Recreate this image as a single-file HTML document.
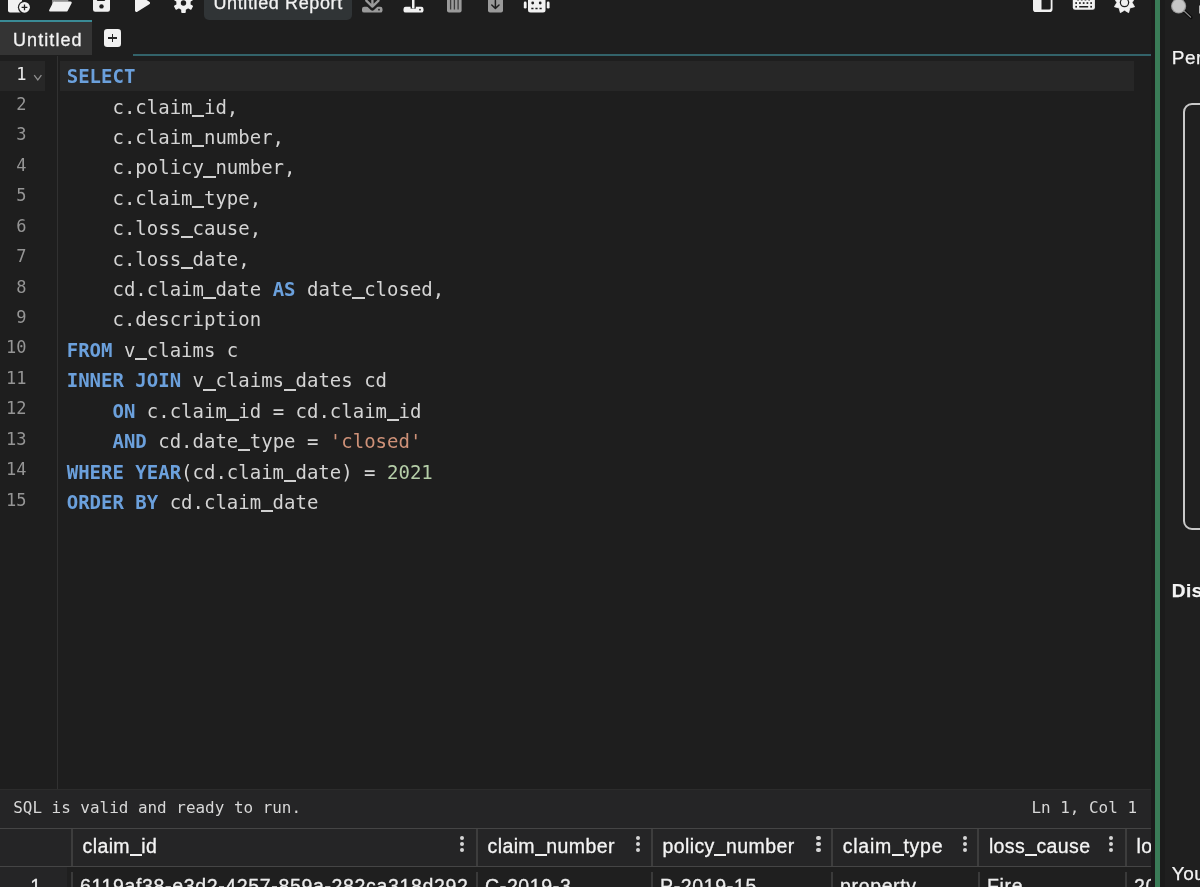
<!DOCTYPE html>
<html lang="en">
<head>
<meta charset="utf-8">
<title>SQL Report Editor</title>
<style>
*{box-sizing:border-box;margin:0;padding:0}
html,body{width:1200px;height:887px;overflow:hidden;background:#1e1e1e}
body{position:relative;font-family:"Liberation Sans",sans-serif;color:#fff}
.abs{position:absolute}
#left{position:absolute;left:0;top:0;width:1151px;height:887px;overflow:hidden;background:#1e1e1e;will-change:transform}
#split{position:absolute;left:1151px;top:0;width:14px;height:887px;background:#1b1b1b}
#split i{position:absolute;left:4px;top:0;width:5px;height:887px;background:#3a7b57}
#right{position:absolute;left:1165px;top:0;width:35px;height:887px;background:#1f1f1f;overflow:hidden;will-change:transform}
.rt{position:absolute;left:6.8px;font-size:19px;line-height:24px;color:#f3f3f3;-webkit-text-stroke:.25px #f3f3f3;white-space:nowrap;letter-spacing:.5px}
#rbox{position:absolute;left:18px;top:102.5px;width:60px;height:427px;border:2px solid #c9c9c9;border-radius:9px}
/* toolbar */
#tb svg{position:absolute;top:0;overflow:visible}
#rname{position:absolute;left:204px;top:-12px;width:148px;height:32px;background:#303436;border-radius:5px;overflow:hidden}
#rname span{position:absolute;left:9.5px;top:5.3px;font-size:18px;line-height:20px;white-space:nowrap;color:#f2f2f2;-webkit-text-stroke:.3px #f2f2f2;letter-spacing:.62px}
/* tabs */
#tab{position:absolute;left:0;top:20.3px;width:91.7px;height:35px;background:#343434;border-top:2px solid #3a8b96}
#tab span{position:absolute;left:13px;top:7.7px;font-size:18px;line-height:20px;color:#f2f2f2;-webkit-text-stroke:.3px #f2f2f2;white-space:nowrap;letter-spacing:1.08px}
#plus{position:absolute;left:104px;top:29.2px;width:17.3px;height:17.8px;background:#f1f1f1;border-radius:3.2px}
#plus:before{content:"";position:absolute;left:4.3px;top:7.9px;width:8.6px;height:1.6px;background:#242424}
#plus:after{content:"";position:absolute;left:7.8px;top:4.5px;width:1.6px;height:8.4px;background:#242424}
#tabline{position:absolute;left:133px;top:54px;width:1018.5px;height:2px;background:#33636a}
/* editor */
#gutter{position:absolute;left:0;top:56px;width:58px;height:733px;border-right:1.5px solid #313131}
#gact{position:absolute;left:0;top:61px;width:45px;height:30px;background:#272727}
#lact{position:absolute;left:60px;top:61px;width:1074px;height:30px;background:#272727}
.ln{position:absolute;left:0;width:26.5px;text-align:right;font-family:"DejaVu Sans Mono","Liberation Mono",monospace;font-size:17px;line-height:30.43px;height:30.43px;color:#959595}
.ln.a{color:#eaeaea}
#code{position:absolute;left:66.7px;top:61.1px;font-family:"DejaVu Sans Mono","Liberation Mono",monospace;font-size:19px;line-height:30.43px;color:#d4d4d4;white-space:pre}
#code div{height:30.43px}
#code b{color:#6ba0dc;font-weight:bold}
#code s{color:#ce9178;text-decoration:none}
#code i{font-style:normal;color:transparent;position:relative;display:inline-block;height:22px;vertical-align:top}
#code i:after{content:"";position:absolute;left:-.5px;right:-.5px;top:23.2px;height:2px;background:#d0d0d0}
#code u{color:#b5cea8;text-decoration:none}
/* status */
#status{position:absolute;left:0;top:789px;width:1151px;height:39px;background:#252526;border-top:1px solid #2c2c2c;font-family:"DejaVu Sans Mono","Liberation Mono",monospace;font-size:15.95px;line-height:20px;color:#d8d8d8}
#status .l{position:absolute;left:13.2px;top:7.5px;white-space:pre}
#status .r{position:absolute;right:14px;top:7.5px;white-space:pre}
/* grid */
#grid{position:absolute;left:0;top:828px;width:1151px;height:59px;background:#1f1f1f;overflow:hidden}
#ghead{position:absolute;left:0;top:0;width:1151px;height:39px;background:#252526;border-top:1px solid #454545;border-bottom:1px solid #454545}
.hc{position:absolute;top:0;height:37px;border-left:2px solid #3d3d3d;font-size:19.5px;letter-spacing:.4px;line-height:34px;color:#f4f4f4;-webkit-text-stroke:.3px #f4f4f4;padding-left:9.5px;white-space:nowrap}
.hc i{font-style:normal;color:transparent;-webkit-text-stroke:0 transparent;position:relative;display:inline-block;height:37px;vertical-align:top}
.hc i:after{content:"";position:absolute;left:-.3px;right:-.3px;top:25.2px;height:1.9px;background:#f0f0f0}
.kb{position:absolute;top:6.8px;width:4.5px;height:18px}
.kb i{position:absolute;left:0;width:4.5px;height:4.5px;border-radius:50%;background:#d6d6d6}
.ds{position:absolute;top:44px;width:2px;height:20px;background:#3a3a3a}
.dc{position:absolute;top:42.5px;height:30px;font-size:19.5px;letter-spacing:.65px;line-height:30px;color:#ececec;-webkit-text-stroke:.3px #ececec;white-space:nowrap}
#rn{position:absolute;left:0;top:39px;width:67px;height:30px;background:#252526}
</style>
</head>
<body>
<div id="left">
  <div id="tb">
<svg class="abs" style="left:0;top:0" width="600" height="20" viewBox="0 0 600 20">
 <!-- new file -->
 <path d="M8 -6 h9 l5 5 v11.5 a2 2 0 0 1 -2 2 h-10 a2 2 0 0 1 -2 -2 z" fill="#f1f1f1"/>
 <circle cx="24.5" cy="7.3" r="6.6" fill="#1e1e1e"/><circle cx="24.5" cy="7.3" r="5.4" fill="#f1f1f1"/>
 <path d="M21.6 7.3 h5.8 M24.5 4.4 v5.8" stroke="#1e1e1e" stroke-width="1.3" fill="none"/>
 <!-- folder open -->
 <path d="M52 -4 h6 l2 2 h8.3 v3.5 h-13.5 l-2.8 5z" fill="#8e8e8e"/>
 <path d="M54.4 1.5 h16.1 a1.2 1.2 0 0 1 1.1 1.7 l-3.9 7.5 a1.6 1.6 0 0 1 -1.4 0.9 h-16.1 a1.1 1.1 0 0 1 -1 -1.6 l3.9 -7.6 a1.6 1.6 0 0 1 1.3 -0.9z" fill="#f1f1f1"/>
 <!-- save -->
 <path d="M93 -6 h14 l3 3 v12.5 a2.2 2.2 0 0 1 -2.2 2.2 h-12.600000000000001 a2.2 2.2 0 0 1 -2.2 -2.2z" fill="#f1f1f1"/>
 <rect x="96.8" y="-3" width="8.4" height="3.9" rx="0.8" fill="#1e1e1e"/>
 <circle cx="101.5" cy="6.4" r="2.2" fill="#1e1e1e"/>
 <!-- play -->
 <path d="M135 -4.6 a1.5 1.5 0 0 1 2.3 -1.3 l12 7.6 a1.5 1.5 0 0 1 0 2.6 l-12 7.4 a1.5 1.5 0 0 1 -2.3 -1.3z" fill="#f1f1f1"/>
 <!-- gear -->
 <g transform="translate(183.5,3)" fill="#f1f1f1">
  <circle r="7.2"/>
  <g id="teeth"><rect x="-2.3" y="-10" width="4.6" height="20" rx="1"/><rect x="-2.3" y="-10" width="4.6" height="20" rx="1" transform="rotate(60)"/><rect x="-2.3" y="-10" width="4.6" height="20" rx="1" transform="rotate(120)"/></g>
  <circle r="2.7" fill="#1e1e1e"/>
 </g>
 <!-- download (grey) -->
 <rect x="362" y="6.8" width="20.5" height="5.8" rx="2.2" fill="#9a9a9a"/><path d="M367.5 3.6 L372.4 8.4 L377.3 3.6" stroke="#1e1e1e" stroke-width="4.6" fill="none" stroke-linecap="round" stroke-linejoin="round"/>
 <path d="M366.3 0.6 L372.4 6.6 L378.5 0.6 M372.4 -6 V6" stroke="#9a9a9a" stroke-width="2.3" fill="none" stroke-linecap="round" stroke-linejoin="round"/>
 
 <circle cx="379" cy="9.7" r="0.9" fill="#1e1e1e"/>
 <!-- upload (white) -->
 <rect x="403.5" y="6.8" width="20" height="5.8" rx="2.2" fill="#f1f1f1"/>
 <rect x="410.6" y="5.6" width="5.2" height="3" fill="#1e1e1e"/>
 <rect x="412" y="-6" width="2.5" height="14.4" rx="1.2" fill="#f1f1f1"/>
 <circle cx="420" cy="9.7" r="0.9" fill="#1e1e1e"/>
 <!-- trash (grey) -->
 <path d="M447 -4 h14.600000000000023 v14.5 a2 2 0 0 1 -2 2 h-10.6 a2 2 0 0 1 -2 -2z" fill="#9a9a9a"/>
 <path d="M450.6 -4 v13.5 M454.4 -4 v13.5 M458.1 -4 v13.5" stroke="#1e1e1e" stroke-width="1.3" opacity="0.75"/>
 <!-- file download (grey) -->
 <path d="M488 -6 h15 v16.6 a2 2 0 0 1 -2 2 h-11 a2 2 0 0 1 -2 -2z" fill="#9a9a9a"/>
 <path d="M495.4 0.6 V8 M491.8 5 L495.4 8.5 L499 5" stroke="#1e1e1e" stroke-width="1.5" fill="none" stroke-linecap="round" stroke-linejoin="round"/>
 <!-- robot -->
 <path d="M528 -6 h17.5 v16 a2.5 2.5 0 0 1 -2.5 2.5 h-12.5 a2.5 2.5 0 0 1 -2.5 -2.5z" fill="#f1f1f1"/>
 <rect x="523.8" y="1.6" width="2.8" height="7" rx="1.3" fill="#f1f1f1"/>
 <rect x="546.8" y="1.6" width="2.8" height="7" rx="1.3" fill="#f1f1f1"/>
 <circle cx="532.7" cy="3" r="1.4" fill="#1e1e1e"/><circle cx="540.2" cy="3" r="1.4" fill="#1e1e1e"/>
 <path d="M531.3 8.5 h2.2 M535.4 8.5 h2.2 M539.5 8.5 h2.2" stroke="#1e1e1e" stroke-width="1.3"/>
</svg>
<svg class="abs" style="left:1020px;top:0" width="131" height="20" viewBox="1020 0 131 20">
 <!-- sidebar -->
 <path d="M1033 -6 h19.5 v15.3 a2.8 2.8 0 0 1 -2.8 2.8 h-13.9 a2.8 2.8 0 0 1 -2.8 -2.8z" fill="#f1f1f1"/>
 <path d="M1041.5 -6 h9.2 v14 a1.6 1.6 0 0 1 -1.6 1.6 h-7.6z" fill="#1e1e1e"/>
 <!-- keyboard -->
 <path d="M1072.8 -6 h22.1 v13.4 a2.4 2.4 0 0 1 -2.4 2.4 h-17.3 a2.4 2.4 0 0 1 -2.4 -2.4z" fill="#f1f1f1"/>
 <g fill="#1e1e1e"><rect x="1077.2" y="-1.2" width="1.7" height="1.7"/><rect x="1080.9" y="-1.2" width="1.7" height="1.7"/><rect x="1084.6" y="-1.2" width="1.7" height="1.7"/><rect x="1088.3" y="-1.2" width="1.7" height="1.7"/>
 <rect x="1075.3" y="2.2" width="1.7" height="1.7"/><rect x="1079.05" y="2.2" width="1.7" height="1.7"/><rect x="1082.8" y="2.2" width="1.7" height="1.7"/><rect x="1086.55" y="2.2" width="1.7" height="1.7"/><rect x="1090.3" y="2.2" width="1.7" height="1.7"/>
 <rect x="1075.3" y="5.9" width="1.7" height="1.7"/><rect x="1079.2" y="6" width="9" height="1.5"/><rect x="1090.3" y="5.9" width="1.7" height="1.7"/></g>
 <!-- sun -->
 <g transform="translate(1124.5,2.6)"><path d="M4.17 -10.07 L5.37 -5.37 L10.07 -4.17 L7.60 -0.00 L10.07 4.17 L5.37 5.37 L4.17 10.07 L0.00 7.60 L-4.17 10.07 L-5.37 5.37 L-10.07 4.17 L-7.60 0.00 L-10.07 -4.17 L-5.37 -5.37 L-4.17 -10.07 L-0.00 -7.60z" fill="#f1f1f1" stroke="#f1f1f1" stroke-width="0.8" stroke-linejoin="round"/><circle r="4.75" fill="#1e1e1e"/><circle r="3.5" fill="#f1f1f1"/></g>
</svg>

    <div id="rname"><span>Untitled Report</span></div>
  </div>
  <div id="tab"><span>Untitled</span></div>
  <div id="plus"></div>
  <div id="tabline"></div>

  <div id="gutter"></div>
  <div id="gact"></div>
  <div id="lact"></div>
  <div id="lns"><div class="ln a" style="top:58.50px">1</div><div class="ln" style="top:88.93px">2</div><div class="ln" style="top:119.36px">3</div><div class="ln" style="top:149.79px">4</div><div class="ln" style="top:180.22px">5</div><div class="ln" style="top:210.65px">6</div><div class="ln" style="top:241.08px">7</div><div class="ln" style="top:271.51px">8</div><div class="ln" style="top:301.94px">9</div><div class="ln" style="top:332.37px">10</div><div class="ln" style="top:362.80px">11</div><div class="ln" style="top:393.23px">12</div><div class="ln" style="top:423.66px">13</div><div class="ln" style="top:454.09px">14</div><div class="ln" style="top:484.52px">15</div><svg class="abs" style="left:33px;top:74px" width="10" height="8" viewBox="0 0 10 8"><path d="M1.2 1.2 L4.8 6 L8.4 1.2" fill="none" stroke="#8f8f8f" stroke-width="1.3"/></svg></div>
  <div id="code"><div><b>SELECT</b></div><div>    c.claim<i>_</i>id,</div><div>    c.claim<i>_</i>number,</div><div>    c.policy<i>_</i>number,</div><div>    c.claim<i>_</i>type,</div><div>    c.loss<i>_</i>cause,</div><div>    c.loss<i>_</i>date,</div><div>    cd.claim<i>_</i>date <b>AS</b> date<i>_</i>closed,</div><div>    c.description</div><div><b>FROM</b> v<i>_</i>claims c</div><div><b>INNER JOIN</b> v<i>_</i>claims<i>_</i>dates cd</div><div>    <b>ON</b> c.claim<i>_</i>id = cd.claim<i>_</i>id</div><div>    <b>AND</b> cd.date<i>_</i>type = <s>'closed'</s></div><div><b>WHERE YEAR</b>(cd.claim<i>_</i>date) = <u>2021</u></div><div><b>ORDER BY</b> cd.claim<i>_</i>date</div></div>

  <div id="status"><span class="l">SQL is valid and ready to run.</span><span class="r">Ln 1, Col 1</span></div>

  <div id="grid">
    <div id="ghead"><div class="hc" style="left:71px">claim<i>_</i>id</div><div class="kb" style="left:459.9px"><i style="top:0"></i><i style="top:6px"></i><i style="top:12px"></i></div><div class="hc" style="left:476px">claim<i>_</i>number</div><div class="kb" style="left:635.5px"><i style="top:0"></i><i style="top:6px"></i><i style="top:12px"></i></div><div class="hc" style="left:651px">policy<i>_</i>number</div><div class="kb" style="left:816.0px"><i style="top:0"></i><i style="top:6px"></i><i style="top:12px"></i></div><div class="hc" style="left:831.3px;letter-spacing:.72px">claim<i>_</i>type</div><div class="kb" style="left:962.5px"><i style="top:0"></i><i style="top:6px"></i><i style="top:12px"></i></div><div class="hc" style="left:977.4px">loss<i>_</i>cause</div><div class="kb" style="left:1108.8px"><i style="top:0"></i><i style="top:6px"></i><i style="top:12px"></i></div><div class="hc" style="left:1125px">loss<i>_</i>date</div></div>
    <div id="rn"></div><div class="ds" style="left:70.5px"></div><div class="ds" style="left:476px"></div><div class="ds" style="left:651px"></div><div class="ds" style="left:831px"></div><div class="ds" style="left:978px"></div><div class="ds" style="left:1125px"></div><div class="dc" style="left:80px">6119af38-e3d2-4257-859a-282ca318d292</div><div class="dc" style="left:485px">C-2019-3</div><div class="dc" style="left:660px">P-2019-15</div><div class="dc" style="left:840px">property</div><div class="dc" style="left:987px">Fire</div><div class="dc" style="left:1134px">2019-01-15</div><div class="dc" style="left:0;width:72px;text-align:center;padding-left:0">1</div>
  </div>
</div>
<div id="split"><i></i></div>
<div id="right"><svg class="abs" style="left:0;top:0" width="35" height="24" viewBox="1165 0 35 24">
<path d="M1183.5 10.5 L1191 17.5" stroke="#0c0c0c" stroke-width="3.2" stroke-linecap="round"/>
<path d="M1183.8 10.8 L1190.6 17.1" stroke="#8c8c8c" stroke-width="1.2" stroke-linecap="round"/>
<circle cx="1178.6" cy="6" r="7.6" fill="#9c9c9c"/><circle cx="1178.6" cy="6" r="6.4" fill="#c6c6c6"/>
<rect x="1199" y="5.5" width="1" height="8" fill="#b5b5b5"/>
</svg>
<div class="rt" style="top:46px">Personalize</div>
<div id="rbox"></div>
<div class="rt" style="top:579px;font-weight:bold">Display</div>
<div class="rt" style="top:861.5px">You can</div></div>
</body>
</html>
